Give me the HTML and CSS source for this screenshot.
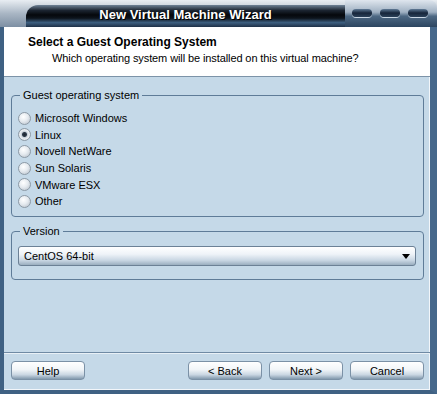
FILE: index.html
```html
<!DOCTYPE html>
<html lang="en">
<head>
    <meta charset="UTF-8">
    <title>New Virtual Machine Wizard</title>
    <link rel="stylesheet" href="styles.css">
</head>
<body>
    <div class="window">
        <!-- Title bar -->
        <div class="titlebar">
            <div class="bar">
                <span class="title">New Virtual Machine Wizard</span>
            </div>
            <div class="controls">
                <span class="pill"></span>
                <span class="pill"></span>
                <span class="pill"></span>
            </div>
        </div>
        <div class="frame">
            <!-- Header -->
            <div class="header">
                <div class="heading">Select a Guest Operating System</div>
                <div class="subheading">Which operating system will be installed on this virtual machine?</div>
            </div>
            <!-- Body -->
            <div class="content">
                <fieldset class="group os-group">
                    <legend>Guest operating system</legend>
                    <label class="radio-option"><input type="radio" name="os"> Microsoft Windows</label>
                    <label class="radio-option"><input type="radio" name="os" checked> Linux</label>
                    <label class="radio-option"><input type="radio" name="os"> Novell NetWare</label>
                    <label class="radio-option"><input type="radio" name="os"> Sun Solaris</label>
                    <label class="radio-option"><input type="radio" name="os"> VMware ESX</label>
                    <label class="radio-option"><input type="radio" name="os"> Other</label>
                </fieldset>
                <fieldset class="group version-group">
                    <legend>Version</legend>
                    <div class="combo">
                        <span>CentOS 64-bit</span>
                        <svg width="8" height="5" viewBox="0 0 8 5"><path d="M0 0h8L4 5z" fill="#000"/></svg>
                    </div>
                </fieldset>
            </div>
            <!-- Buttons -->
            <div class="footer">
                <button class="btn">Help</button>
                <div class="nav-buttons">
                    <button class="btn">&lt; Back</button>
                    <button class="btn">Next &gt;</button>
                    <button class="btn">Cancel</button>
                </div>
            </div>
        </div>
    </div>
</body>
</html>
```

FILE: styles.css
```css
/* Wizard window */
body {
    margin: 0;
    font-family: "Liberation Sans", Arial, sans-serif;
    font-size: 11px;
    color: #000;
    background: #c5d9e8;
}
.window {
    width: 437px;
    height: 394px;
    display: flex;
    flex-direction: column;
    overflow: hidden;
}
.titlebar {
    height: 27px;
    display: flex;
    background: linear-gradient(#e8edf2, #a9b6c4 50%, #7d8fa3);
}
.bar {
    flex: 1;
    margin: 5px 0 0 26px;
    border-top-left-radius: 12px;
    background: linear-gradient(#6e8296 0, #1b2430 25%, #05080c 45%, #0d141c 60%, #3d5f80 80%, #1e3047 100%);
    display: flex;
    justify-content: center;
    align-items: center;
}
.title {
    color: #fff;
    font-weight: bold;
    font-size: 13px;
    text-shadow: 1px 1px 0 #000;
    margin-top: -4px;
}
.controls {
    width: 92px;
    display: flex;
    gap: 8px;
    padding: 9px 9px 0 7px;
    box-sizing: border-box;
    background: linear-gradient(#dfe6ee, #9fb0c2 45%, #4d6883 60%, #2c4560);
    border-top-right-radius: 8px;
}
.pill {
    width: 20px;
    height: 8px;
    border-radius: 4px;
    background: linear-gradient(#5f7a96, #16253a 50%, #2a4058);
    box-shadow: 0 1px 0 #c9d6e3;
}
.frame {
    flex: 1;
    display: flex;
    flex-direction: column;
    border-left: 4px solid #3f6183;
    border-right: 7px solid #46688b;
    border-bottom: 4px solid #3f6183;
    box-shadow: inset -1px -1px 0 #f2f6fa;
}
.header {
    height: 50px;
    background: #fff;
    border-bottom: 1px solid #7c93a8;
    padding: 8px 0 0 24px;
    box-sizing: border-box;
}
.heading {
    font-weight: bold;
    font-size: 12px;
}
.subheading {
    margin: 3px 0 0 24px;
    letter-spacing: -0.1px;
}
.content {
    flex: 1;
    padding: 12px 6px 0 7px;
}
.group {
    margin: 0;
    border: 1px solid #5f7c98;
    border-radius: 4px;
    padding: 0 0 0 6px;
}
.group legend {
    padding: 0 3px;
    margin-left: 2px;
}
.os-group {
    padding-top: 9px;
    padding-bottom: 8px;
    height: 128px;
    box-sizing: border-box;
}
.radio-option {
    display: flex;
    align-items: center;
    height: 16.6px;
}
.radio-option input[type="radio"] {
    appearance: none;
    width: 13px;
    height: 13px;
    margin: 0 4px 0 0;
    border-radius: 50%;
    border: 1px solid #8d9aa6;
    box-sizing: border-box;
    background: radial-gradient(circle at 40% 35%, #ffffff 0, #e6ebf0 45%, #b3bcc6 100%);
}
.radio-option input[type="radio"]:checked {
    background: radial-gradient(circle at 50% 50%, #1d2631 0, #2d3946 2px, #c9d1da 3px, #eef1f4 60%, #b3bcc6 100%);
}
.version-group {
    margin-top: 8px;
    padding: 9px 0 13px 6px;
}
.combo {
    width: 398px;
    height: 20px;
    box-sizing: border-box;
    display: flex;
    justify-content: space-between;
    align-items: center;
    padding: 0 5px 0 5px;
    border: 1px solid #6c8196;
    border-radius: 3px;
    background: linear-gradient(#ffffff, #eef3f8 40%, #c7d5e2 75%, #9aaebf);
}
.footer {
    height: 38px;
    border-top: 1px solid #6f8aa4;
    box-shadow: inset 0 1px 0 #e8f0f6;
    display: flex;
    justify-content: space-between;
    padding: 8px 6px 0 7px;
    box-sizing: border-box;
}
.nav-buttons {
    display: flex;
    gap: 7px;
}
.btn {
    width: 74px;
    height: 19px;
    font-family: "Liberation Sans", Arial, sans-serif;
    font-size: 11px;
    color: #000;
    border: 1px solid #7b91a6;
    border-radius: 4px;
    padding: 0;
    background: linear-gradient(#ffffff, #f1f5f8 45%, #c9d6e2 75%, #8299ad);
}
```
